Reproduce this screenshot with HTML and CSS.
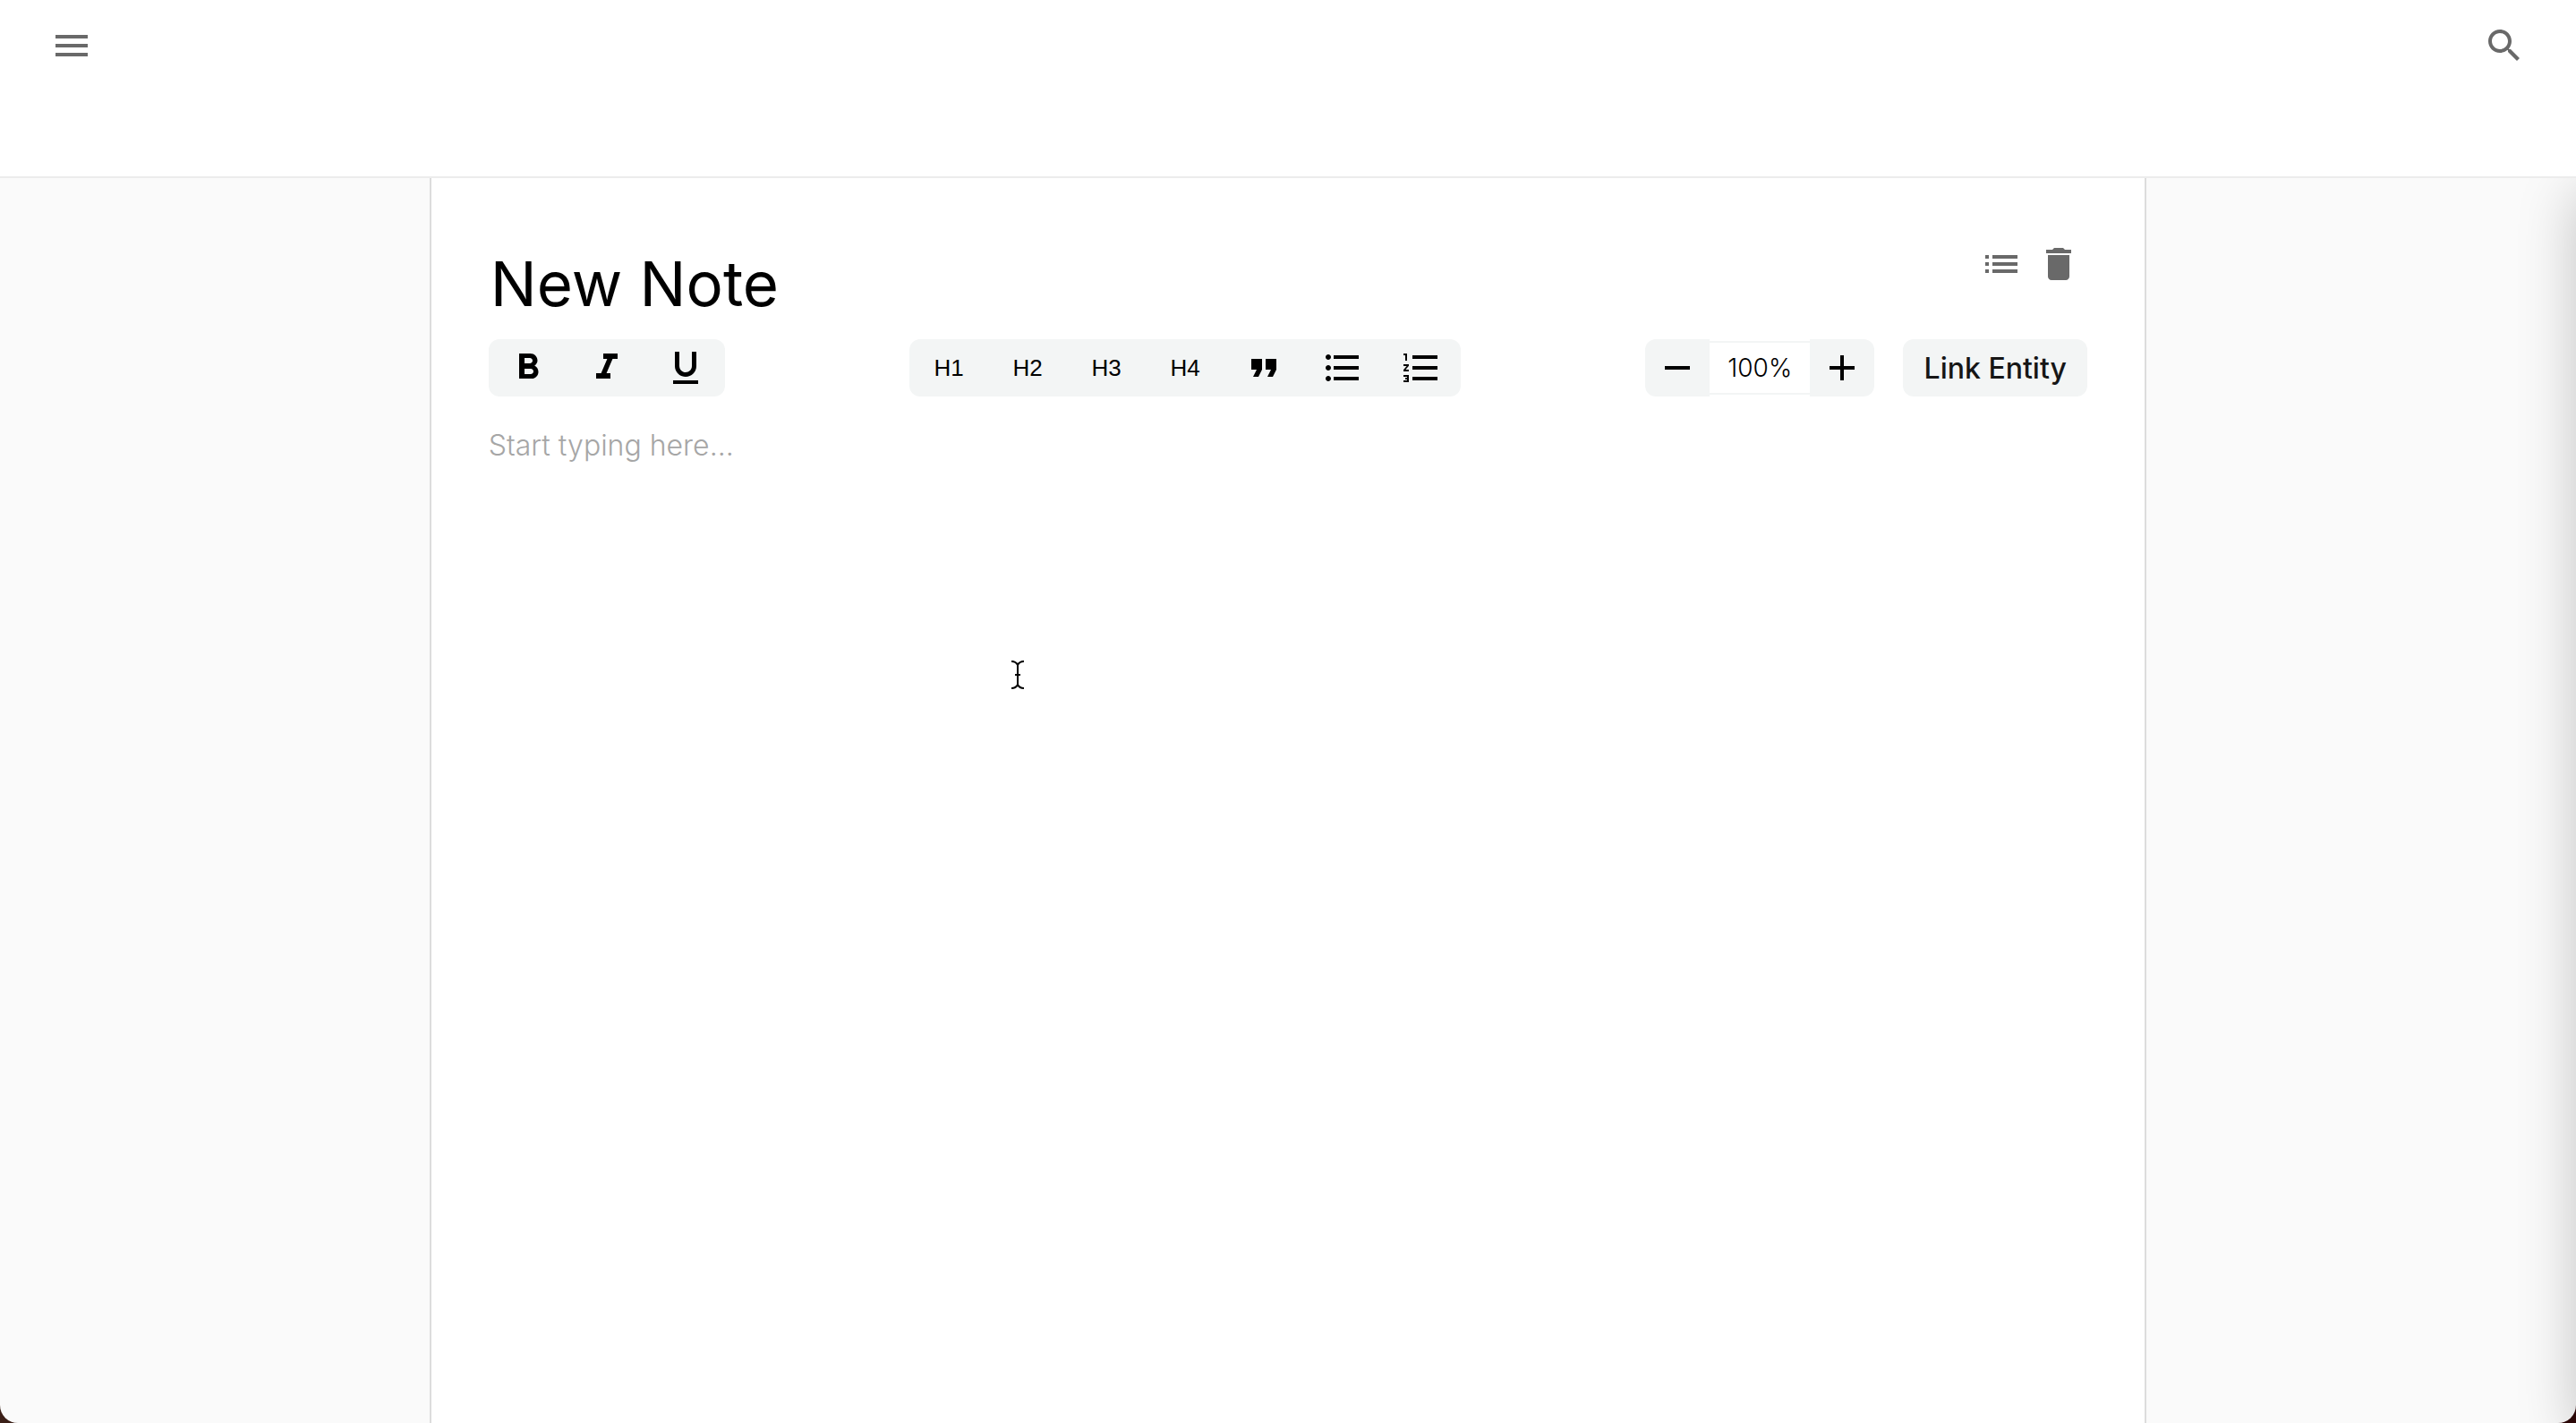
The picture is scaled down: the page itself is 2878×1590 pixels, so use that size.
FILE: index.html
```html
<!DOCTYPE html>
<html lang="en">
<head>
<meta charset="utf-8">
<meta name="viewport" content="width=device-width, initial-scale=1">
<title>New Note</title>
<link rel="stylesheet" href="styles.css">
</head>
<body>
<div class="app">
  <header class="topbar">
    <button class="icon-button" type="button" aria-label="Menu"><svg class="icon" viewBox="0 0 24 24"><path d="M3 18h18v-2H3v2zm0-5h18v-2H3v2zm0-7v2h18V6H3z"/></svg></button>
    <button class="icon-button" type="button" aria-label="Search"><svg class="icon" viewBox="0 0 24 24"><path d="M15.5 14h-.79l-.28-.27C15.41 12.59 16 11.11 16 9.5 16 5.91 13.09 3 9.5 3S3 5.91 3 9.5 5.91 16 9.5 16c1.61 0 3.09-.59 4.23-1.57l.27.28v.79l5 4.99L20.49 19l-4.99-5zm-6 0C7.01 14 5 11.99 5 9.5S7.01 5 9.5 5 14 7.01 14 9.5 11.99 14 9.5 14z"/></svg></button>
  </header>
  <main class="workspace">
    <article class="note">
      <div class="note-head">
        <input class="note-title" type="text" value="New Note" aria-label="Note title">
        <div class="note-actions">
          <button class="icon-button" type="button" aria-label="Contents"><svg class="icon" viewBox="0 0 24 24"><path d="M3 13h2v-2H3v2zm0 4h2v-2H3v2zm0-8h2V7H3v2zm4 4h14v-2H7v2zm0 4h14v-2H7v2zM7 7v2h14V7H7z"/></svg></button>
          <button class="icon-button" type="button" aria-label="Delete note"><svg class="icon" viewBox="0 0 24 24"><path d="M6 19c0 1.100.9 2 2 2h8c1.100 0 2-.9 2-2V7H6v12zM19 4h-3.500l-1-1h-5l-1 1H5v2h14V4z"/></svg></button>
        </div>
      </div>
      <div class="toolbar">
        <div class="group">
          <button class="tool" type="button" aria-label="Bold"><svg class="icon" viewBox="0 0 24 24"><path d="M15.600 10.790c.97-.67 1.650-1.770 1.650-2.790 0-2.260-1.750-4-4-4H7v14h7.040c2.090 0 3.710-1.700 3.710-3.790 0-1.520-.86-2.820-2.150-3.420zM10 6.500h3c.83 0 1.500.67 1.500 1.500s-.67 1.500-1.500 1.500h-3v-3zm3.500 9H10v-3h3.500c.83 0 1.500.67 1.500 1.500s-.67 1.500-1.500 1.500z"/></svg></button>
          <button class="tool" type="button" aria-label="Italic"><svg class="icon" viewBox="0 0 24 24"><path d="M10 4v3h2.210l-3.420 8H6v3h8v-3h-2.210l3.420-8H18V4z"/></svg></button>
          <button class="tool" type="button" aria-label="Underline"><svg class="icon" viewBox="0 0 24 24"><path d="M12 17c3.310 0 6-2.690 6-6V3h-2.500v8c0 1.930-1.570 3.500-3.500 3.500S8.500 12.930 8.500 11V3H6v8c0 3.310 2.690 6 6 6zm-7 2v2h14v-2H5z"/></svg></button>
        </div>
        <div class="group">
          <button class="tool" type="button">H1</button>
          <button class="tool" type="button">H2</button>
          <button class="tool" type="button">H3</button>
          <button class="tool" type="button">H4</button>
          <button class="tool" type="button" aria-label="Quote"><svg class="icon" viewBox="0 0 24 24"><path d="M6 17h3l2-4V7H5v6h3zm8 0h3l2-4V7h-6v6h3z"/></svg></button>
          <button class="tool" type="button" aria-label="Bulleted list"><svg class="icon" viewBox="0 0 24 24"><path d="M4 10.500c-.83 0-1.500.67-1.500 1.500s.67 1.500 1.500 1.500 1.500-.67 1.500-1.500-.67-1.500-1.500-1.500zm0-6c-.83 0-1.500.67-1.500 1.500S3.170 7.500 4 7.500 5.500 6.830 5.500 6 4.830 4.500 4 4.500zm0 12c-.83 0-1.500.68-1.500 1.500s.68 1.500 1.500 1.500 1.500-.68 1.500-1.500-.67-1.500-1.500-1.500zM7 19h14v-2H7v2zm0-6h14v-2H7v2zm0-8v2h14V5H7z"/></svg></button>
          <button class="tool" type="button" aria-label="Numbered list"><svg class="icon" viewBox="0 0 24 24"><path d="M2 17h2v.5H3v1h1v.5H2v1h3v-4H2v1zm1-9h1V4H2v1h1v3zm-1 3h1.800L2 13.100v.9h3v-1H3.200L5 10.900V10H2v1zm5-6v2h14V5H7zm0 14h14v-2H7v2zm0-6h14v-2H7v2z"/></svg></button>
        </div>
        <div class="side">
          <div class="zoom">
            <button class="step step-down" type="button" aria-label="Zoom out"><svg class="icon" viewBox="0 0 24 24"><path d="M19 13H5v-2h14v2z"/></svg></button>
            <input class="zoom-value" type="text" value="100%" aria-label="Zoom level">
            <button class="step step-up" type="button" aria-label="Zoom in"><svg class="icon" viewBox="0 0 24 24"><path d="M19 13h-6v6h-2v-6H5v-2h6V5h2v6h6v2z"/></svg></button>
          </div>
          <button class="link-entity" type="button">Link Entity</button>
        </div>
      </div>
      <textarea class="editor" placeholder="Start typing here..." aria-label="Note text"></textarea>
    </article>
    <div class="drawer"></div>
  </main>
</div>
<svg class="pointer" viewBox="0 0 16 34" aria-hidden="true"><path d="M1 2q5 0 7 4q2-4 7-4M8 5v24M1 32q5 0 7-4q2 4 7 4M5 17h6"/></svg>
</body>
</html>
```
FILE: styles.css
```css
* { box-sizing: border-box; }

body {
  margin: 0;
  background: linear-gradient(to right, #3b2018, #2a0606);
  font-family: Inter, "Liberation Sans", sans-serif;
  color: #000;
}

button, input, textarea {
  margin: 0;
  padding: 0;
  border: 0;
  background: none;
  color: inherit;
  font: inherit;
}

.app {
  display: flex;
  flex-direction: column;
  min-height: 100vh;
  overflow: hidden;
  border-radius: 0 0 20px 20px;
  background: #fafafa;
}

.topbar {
  display: flex;
  justify-content: space-between;
  align-items: flex-start;
  height: 199px;
  padding: 27px 56px;
  border-bottom: 2px solid #ececec;
  background: #fff;
}

.icon {
  display: block;
  width: 48px;
  height: 48px;
  fill: currentColor;
}

.icon-button { color: #696969; }

.workspace {
  position: relative;
  display: flex;
  flex: 1;
  justify-content: center;
  overflow: hidden;
}

.note {
  display: flex;
  flex-direction: column;
  width: 66.66%;
  padding: 72px 64px 0;
  border: solid #dcdcdc;
  border-width: 0 2px;
  background: #fff;
}

.note-head {
  display: flex;
  align-items: flex-start;
  justify-content: space-between;
  height: 108px;
}

.note-title {
  flex: 1;
  min-width: 0;
  height: 92px;
  padding-left: 2px;
  font-size: 69px;
  line-height: 92px;
}

.note-actions {
  display: flex;
  gap: 16px;
  padding-right: 8px;
}

.toolbar {
  display: flex;
  justify-content: space-between;
  height: 64px;
}

.group {
  display: flex;
  overflow: hidden;
  border-radius: 12px;
  background: #f3f5f5;
}

.tool {
  display: flex;
  align-items: center;
  justify-content: center;
  width: 88px;
  font-family: "Liberation Sans", Arial, sans-serif;
  font-size: 26px;
}

.side {
  display: flex;
  gap: 32px;
}

.zoom {
  display: flex;
  align-items: center;
}

.step {
  display: flex;
  align-items: center;
  justify-content: center;
  width: 72px;
  height: 64px;
  background: #f3f5f5;
}

.step-down { border-radius: 12px 0 0 12px; }
.step-up { border-radius: 0 12px 12px 0; }

.zoom-value {
  width: 112px;
  height: 60px;
  border: solid #f3f5f5;
  border-width: 2px 0;
  font-size: 28px;
  font-weight: 300;
  text-align: center;
}

.link-entity {
  width: 206px;
  border-radius: 12px;
  background: #f3f5f5;
  color: #161616;
  font-size: 32px;
  font-weight: 500;
}

.editor {
  flex: 1;
  padding-top: 35px;
  outline: 0;
  resize: none;
  font-size: 32px;
  font-weight: 300;
  line-height: 40px;
}

.editor::placeholder {
  color: #a6a6a6;
  opacity: 1;
}

/* The closed side drawer sits past the right edge; only its shadow shows */
.drawer {
  position: absolute;
  top: 0;
  bottom: 0;
  left: 100%;
  width: 400px;
  box-shadow: 0 16px 60px rgba(0, 0, 0, 0.22);
}

.pointer {
  position: absolute;
  top: 737px;
  left: 1129px;
  width: 16px;
  height: 34px;
  fill: none;
  stroke: #000;
  stroke-width: 2;
  pointer-events: none;
}
```
